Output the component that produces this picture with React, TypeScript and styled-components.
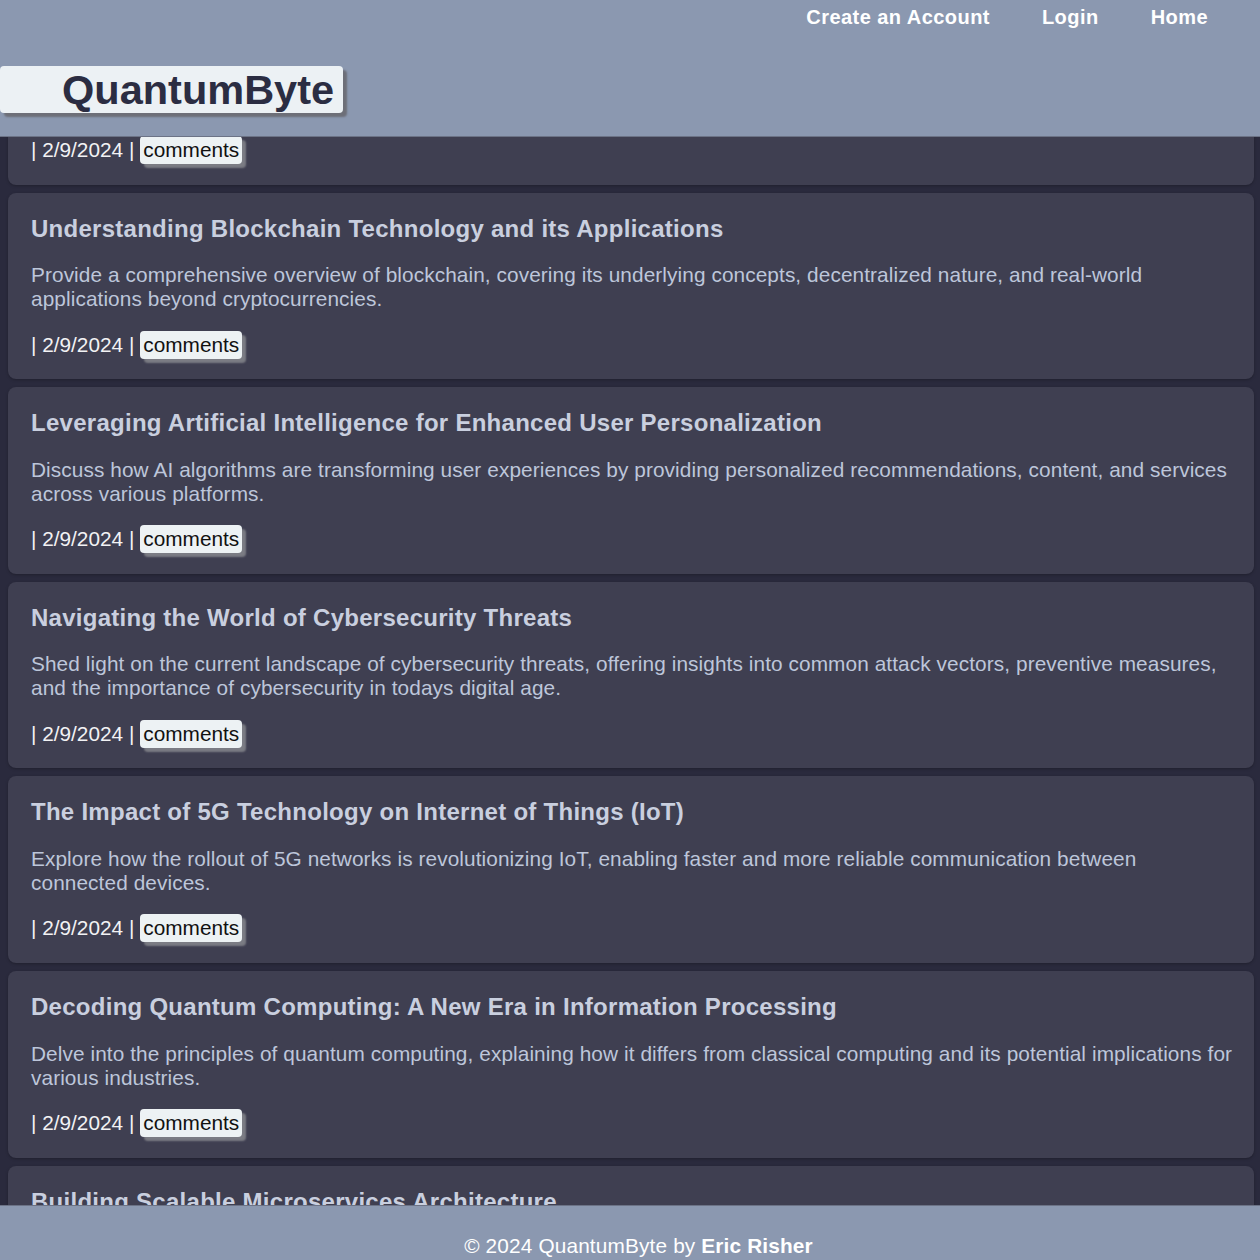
import styled, { createGlobalStyle } from "styled-components";

const posts = [
  {
    title: "Exploring the Evolution of Modern Web Development",
    body: "Trace the journey of web development from static pages to dynamic applications, highlighting the frameworks, tools, and practices shaping the web today.",
  },
  {
    title: "Understanding Blockchain Technology and its Applications",
    body: "Provide a comprehensive overview of blockchain, covering its underlying concepts, decentralized nature, and real-world applications beyond cryptocurrencies.",
  },
  {
    title: "Leveraging Artificial Intelligence for Enhanced User Personalization",
    body: "Discuss how AI algorithms are transforming user experiences by providing personalized recommendations, content, and services across various platforms.",
  },
  {
    title: "Navigating the World of Cybersecurity Threats",
    body: "Shed light on the current landscape of cybersecurity threats, offering insights into common attack vectors, preventive measures, and the importance of cybersecurity in todays digital age.",
  },
  {
    title: "The Impact of 5G Technology on Internet of Things (IoT)",
    body: "Explore how the rollout of 5G networks is revolutionizing IoT, enabling faster and more reliable communication between connected devices.",
  },
  {
    title: "Decoding Quantum Computing: A New Era in Information Processing",
    body: "Delve into the principles of quantum computing, explaining how it differs from classical computing and its potential implications for various industries.",
  },
  {
    title: "Building Scalable Microservices Architecture",
    body: "Examine the principles behind microservices, how to split a monolith into independent services, and the patterns that keep large systems reliable.",
  },
];

const GlobalStyle = createGlobalStyle`
  *, *::before, *::after {
    margin: 0;
    padding: 0;
    box-sizing: border-box;
  }

  html, body {
    width: 100%;
    height: 100%;
    overflow: hidden;
    background: #2a2a3d;
    font-family: "Liberation Sans", Arial, sans-serif;
  }
`;

const Header = styled.header`
  position: fixed;
  top: 0;
  left: 0;
  right: 0;
  height: 137px;
  background: #8b98b0;
  border-bottom: 1px solid #6c7386;
  display: flex;
  flex-direction: column;
  padding-top: 6px;
  z-index: 10;
`;

const Nav = styled.nav`
  display: flex;
  justify-content: flex-end;
  padding-right: 26px;
`;

const NavLink = styled.a`
  font-size: 20px;
  line-height: 23px;
  font-weight: 700;
  letter-spacing: 0.45px;
  color: #ffffff;
  text-decoration: none;
  margin: 0 26px;
`;

const Logo = styled.h1`
  align-self: flex-start;
  margin-top: 37px;
  padding: 0 9px 0 62px;
  background: #ecf1f4;
  border-radius: 4px;
  box-shadow: 4px 4px 2px #6d6f78;
  font-size: 41.5px;
  line-height: 47px;
  font-weight: 700;
  color: #2b2d42;
`;

const Main = styled.main`
  display: flex;
  flex-direction: column;
  gap: 8px;
  margin-top: -2px;
  padding: 0 6px 0 8px;
`;

const Card = styled.article`
  background: #3f3f51;
  border-radius: 8px;
  box-shadow: 0 1px 3px rgba(0, 0, 0, 0.25);
  padding: 22px 19px 20px 23px;
`;

const Title = styled.h2`
  font-size: 24px;
  line-height: 27.6px;
  font-weight: 700;
  letter-spacing: 0.27px;
  color: #c9cfdf;
  margin-bottom: 21px;
`;

const Body = styled.p`
  font-size: 20.8px;
  line-height: 24px;
  letter-spacing: 0.09px;
  color: #bdc6da;
  margin-bottom: 19px;
`;

const Meta = styled.div`
  display: flex;
  align-items: center;
  height: 29px;
  font-size: 20.8px;
  color: #f2f2f4;
  white-space: pre;
`;

const CommentsButton = styled.a`
  margin-left: 6px;
  padding: 2px 3px;
  border-radius: 4px;
  background: #edf2f4;
  box-shadow: 4px 4px 2px #7b7c84;
  color: #111111;
  font-size: 20.8px;
  line-height: 24px;
  text-decoration: none;
`;

const Footer = styled.footer`
  position: fixed;
  left: 0;
  right: 0;
  bottom: 0;
  height: 55px;
  background: #8b98b0;
  border-top: 1px solid #6c7386;
  padding: 28px 0 0 17px;
  text-align: center;
  font-size: 20.8px;
  line-height: 24px;
  letter-spacing: 0.15px;
  color: #ffffff;
  z-index: 10;
`;

export default function App() {
  return (
    <>
      <GlobalStyle />
      <Header>
        <Nav>
          <NavLink href="#">Create an Account</NavLink>
          <NavLink href="#">Login</NavLink>
          <NavLink href="#">Home</NavLink>
        </Nav>
        <Logo>QuantumByte</Logo>
      </Header>
      <Main>
        {posts.map((post) => (
          <Card key={post.title}>
            <Title>{post.title}</Title>
            <Body>{post.body}</Body>
            <Meta>
              {"| 2/9/2024 |"}
              <CommentsButton href="#">comments</CommentsButton>
            </Meta>
          </Card>
        ))}
      </Main>
      <Footer>
        © 2024 QuantumByte by <strong>Eric Risher</strong>
      </Footer>
    </>
  );
}
